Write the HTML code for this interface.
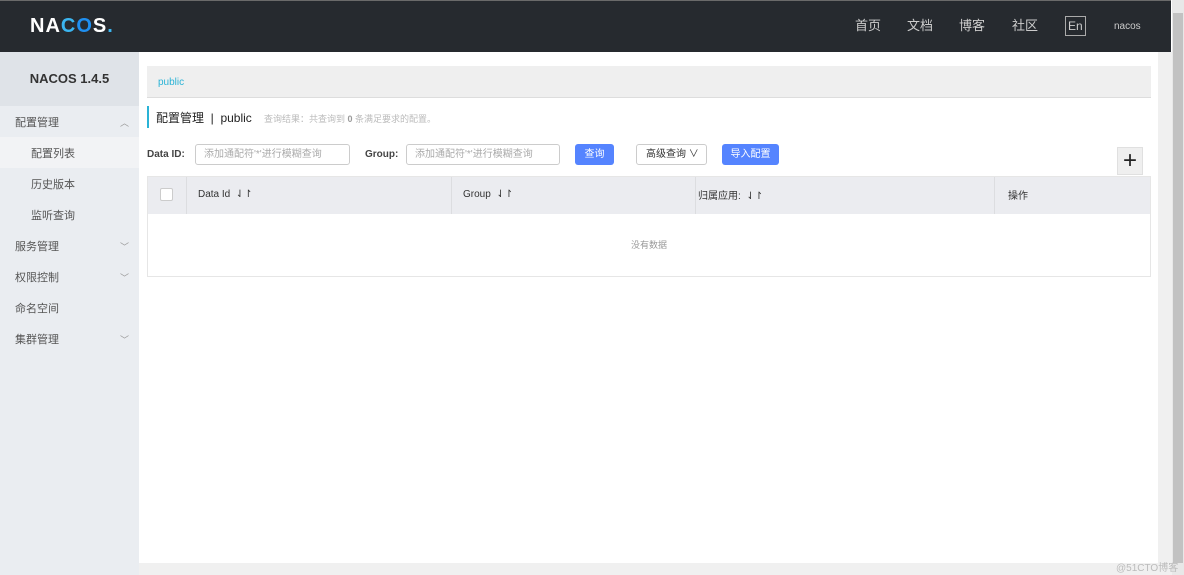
<!DOCTYPE html>
<html><head><meta charset="utf-8"><style>
*{margin:0;padding:0;box-sizing:border-box}
body{width:1184px;height:575px;overflow:hidden;background:#fff;font-family:"Liberation Sans","Noto Sans CJK SC",sans-serif;position:relative;font-size:12px;color:#333}
.hdr{position:absolute;left:0;top:0;width:1171px;height:52px;background:#262a2f;border-top:1px solid #6a6a6a}
.logo{position:absolute;left:30px;top:14px;color:#fff;font-size:20px;font-weight:bold;letter-spacing:1px}
.nav{position:absolute;top:16px;color:#ccc;font-size:13px;line-height:18px}
.side{position:absolute;left:0;top:52px;width:139px;height:523px;background:#eaedf1}
.side .t{height:54px;background:#dfe3e8;text-align:center;line-height:54px;font-weight:bold;font-size:13px;color:#333}
.it{height:31px;line-height:34px;padding-left:15px;color:#555;font-size:11px;position:relative}
.it.s{padding-left:31px}
.it.a{background:#f2f3f5}
.ch{position:absolute;right:10px;top:0;color:#999;font-size:9px}
.abs{position:absolute}
.inp{position:absolute;height:21px;border:1px solid #ccc;border-radius:3px;color:#aaa;font-size:10px;line-height:19px;padding-left:8px}
.btn{position:absolute;height:21px;border-radius:3px;background:#5584ff;color:#fff;font-size:10px;line-height:21px;text-align:center}
</style></head><body>
<div class="hdr">
<div class="logo">NA<span style="color:#3bb5f0">C</span><span style="color:#1f8ff0">O</span>S<span style="color:#3bb5f0">.</span></div>
<div class="nav" style="left:855px">首页</div>
<div class="nav" style="left:907px">文档</div>
<div class="nav" style="left:959px">博客</div>
<div class="nav" style="left:1012px">社区</div>
<div class="nav" style="left:1065px;top:15px;border:1px solid #aaa;padding:0 2px;font-size:12px">En</div>
<div class="nav" style="left:1114px;top:17px;font-size:10px">nacos</div>
</div>
<div class="side">
<div class="t">NACOS 1.4.5</div>
<div class="it">配置管理<span class="ch">︿</span></div>
<div class="it s a">配置列表</div>
<div class="it s">历史版本</div>
<div class="it s">监听查询</div>
<div class="it">服务管理<span class="ch">﹀</span></div>
<div class="it">权限控制<span class="ch">﹀</span></div>
<div class="it">命名空间</div>
<div class="it">集群管理<span class="ch">﹀</span></div>
</div>
<div class="abs" style="left:147px;top:66px;width:1004px;height:32px;background:#efefef;border-bottom:1px solid #ddd;color:#2ab3d6;font-size:10px;line-height:34px;padding-left:11px">public</div>
<div class="abs" style="left:147px;top:106px;width:2px;height:22px;background:#2ab3d6"></div>
<div class="abs" style="left:156px;top:109px;font-size:12px;color:#222">配置管理 &nbsp;|&nbsp; public</div>
<div class="abs" style="left:264px;top:112px;font-size:9px;color:#bbb">查询结果：共查询到 <b style="color:#999">0</b> 条满足要求的配置。</div>
<div class="abs" style="left:147px;top:149px;font-size:10px;font-weight:bold;color:#444">Data ID:</div>
<div class="inp" style="left:195px;top:144px;width:155px">添加通配符'*'进行模糊查询</div>
<div class="abs" style="left:365px;top:149px;font-size:10px;font-weight:bold;color:#444">Group:</div>
<div class="inp" style="left:406px;top:144px;width:154px">添加通配符'*'进行模糊查询</div>
<div class="btn" style="left:575px;top:144px;width:39px">查询</div>
<div class="inp" style="left:636px;top:144px;width:71px;color:#333;padding-left:9px">高级查询 ∨</div>
<div class="btn" style="left:722px;top:144px;width:57px">导入配置</div>
<div class="abs" style="left:1117px;top:147px;width:26px;height:28px;background:#efefef;border:1px solid #e0e0e0;font-size:24px;line-height:26px;text-align:center;color:#222">+</div>
<div class="abs" style="left:147px;top:176px;width:1004px;height:101px;border:1px solid #e6e6e6">
<div style="height:37px;background:#ebecf0;position:relative;font-size:10px;color:#333">
<div class="abs" style="left:12px;top:11px;width:13px;height:13px;background:#fff;border:1px solid #ccc;border-radius:2px"></div>
<div class="abs" style="left:38px;top:0;width:1px;height:37px;background:#dcdde0"></div>
<div class="abs" style="left:50px;top:12px">Data Id &nbsp;⇃↾</div>
<div class="abs" style="left:303px;top:0;width:1px;height:37px;background:#dcdde0"></div>
<div class="abs" style="left:315px;top:12px">Group &nbsp;⇃↾</div>
<div class="abs" style="left:547px;top:0;width:1px;height:37px;background:#dcdde0"></div>
<div class="abs" style="left:550px;top:10px">归属应用: &nbsp;⇃↾</div>
<div class="abs" style="left:846px;top:0;width:1px;height:37px;background:#dcdde0"></div>
<div class="abs" style="left:860px;top:10px">操作</div>
</div>
<div style="text-align:center;line-height:62px;font-size:9px;color:#999">没有数据</div>
</div>
<div class="abs" style="left:1158px;top:52px;width:14px;height:511px;background:#f0f0f0"></div>
<div class="abs" style="left:1172px;top:0;width:12px;height:575px;background:#e8e8e8"><div style="position:absolute;left:1px;top:13px;width:10px;height:550px;background:#c2c2c2"></div></div>
<div class="abs" style="left:139px;top:563px;width:1033px;height:12px;background:#f0f0f0"></div>
<div class="abs" style="left:1116px;top:559px;font-size:10px;color:#bbb">@51CTO博客</div>
</body></html>
